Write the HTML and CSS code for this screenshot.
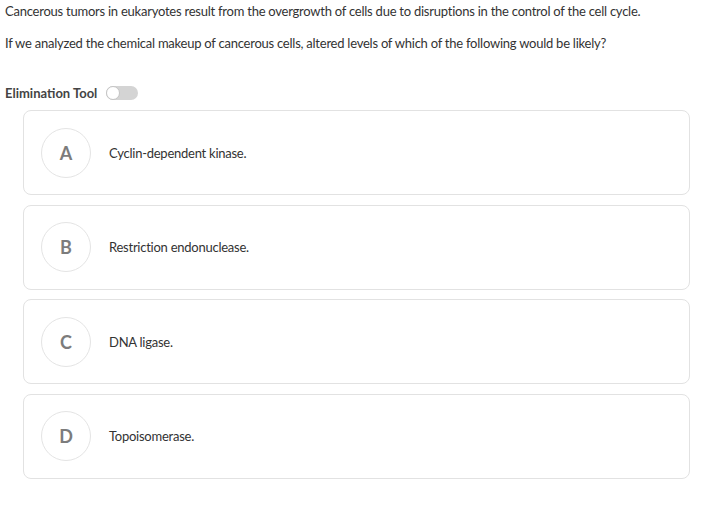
FILE: index.html
```html
<!DOCTYPE html>
<html>
<head>
<meta charset="utf-8">
<link rel="stylesheet" href="styles.css">
</head>
<body>
<div class="page">
  <p class="q q1">Cancerous tumors in eukaryotes result from the overgrowth of cells due to disruptions in the control of the cell cycle.</p>
  <p class="q q2">If we analyzed the chemical makeup of cancerous cells, altered levels of which of the following would be likely?</p>
  <div class="elim">
    <span class="elim-label">Elimination Tool</span>
    <span class="toggle"><span class="knob"></span></span>
  </div>
  <div class="options">
    <div class="option"><span class="letter">A</span><span class="text">Cyclin-dependent kinase.</span></div>
    <div class="option"><span class="letter">B</span><span class="text">Restriction endonuclease.</span></div>
    <div class="option"><span class="letter">C</span><span class="text">DNA ligase.</span></div>
    <div class="option"><span class="letter">D</span><span class="text">Topoisomerase.</span></div>
  </div>
</div>
</body>
</html>
```
FILE: styles.css
```css
html, body {
  margin: 0;
  padding: 0;
  background: #fff;
}
.page {
  font-family: Lato, "Liberation Sans", sans-serif;
  color: #333;
  padding: 0 0 0 5px;
}
.q {
  margin: 0;
  font-size: 13px;
  line-height: 20px;
  letter-spacing: -0.24px;
}
.q1 {
  padding-top: 1px;
}
.q2 {
  margin-top: 12px;
}
.elim {
  display: flex;
  align-items: center;
  margin-top: 30px;
  height: 20px;
}
.elim-label {
  font-size: 13px;
  font-weight: 700;
  color: #444;
  letter-spacing: 0;
}
.toggle {
  margin-left: 9px;
  width: 32px;
  height: 14px;
  border-radius: 7px;
  background: #d4d4d4;
  position: relative;
}
.knob {
  position: absolute;
  left: 0;
  top: 0;
  width: 12px;
  height: 12px;
  border-radius: 50%;
  background: #fff;
  border: 1px solid #c4c4c4;
}
.options {
  margin: 7px 0 0 18px;
  width: 667px;
  display: flex;
  flex-direction: column;
  gap: 9.5px;
}
.option {
  height: 83px;
  border: 1px solid #e2e2e2;
  border-radius: 8px;
  display: flex;
  align-items: center;
  padding-left: 17px;
}
.letter {
  width: 48px;
  height: 48px;
  border: 1px solid #e4e4e4;
  border-radius: 50%;
  display: flex;
  align-items: center;
  justify-content: center;
  font-size: 18px;
  font-weight: 700;
  color: #7c7c7c;
}
.text {
  margin-left: 18px;
  font-size: 13px;
  letter-spacing: -0.25px;
  color: #333;
}
```
